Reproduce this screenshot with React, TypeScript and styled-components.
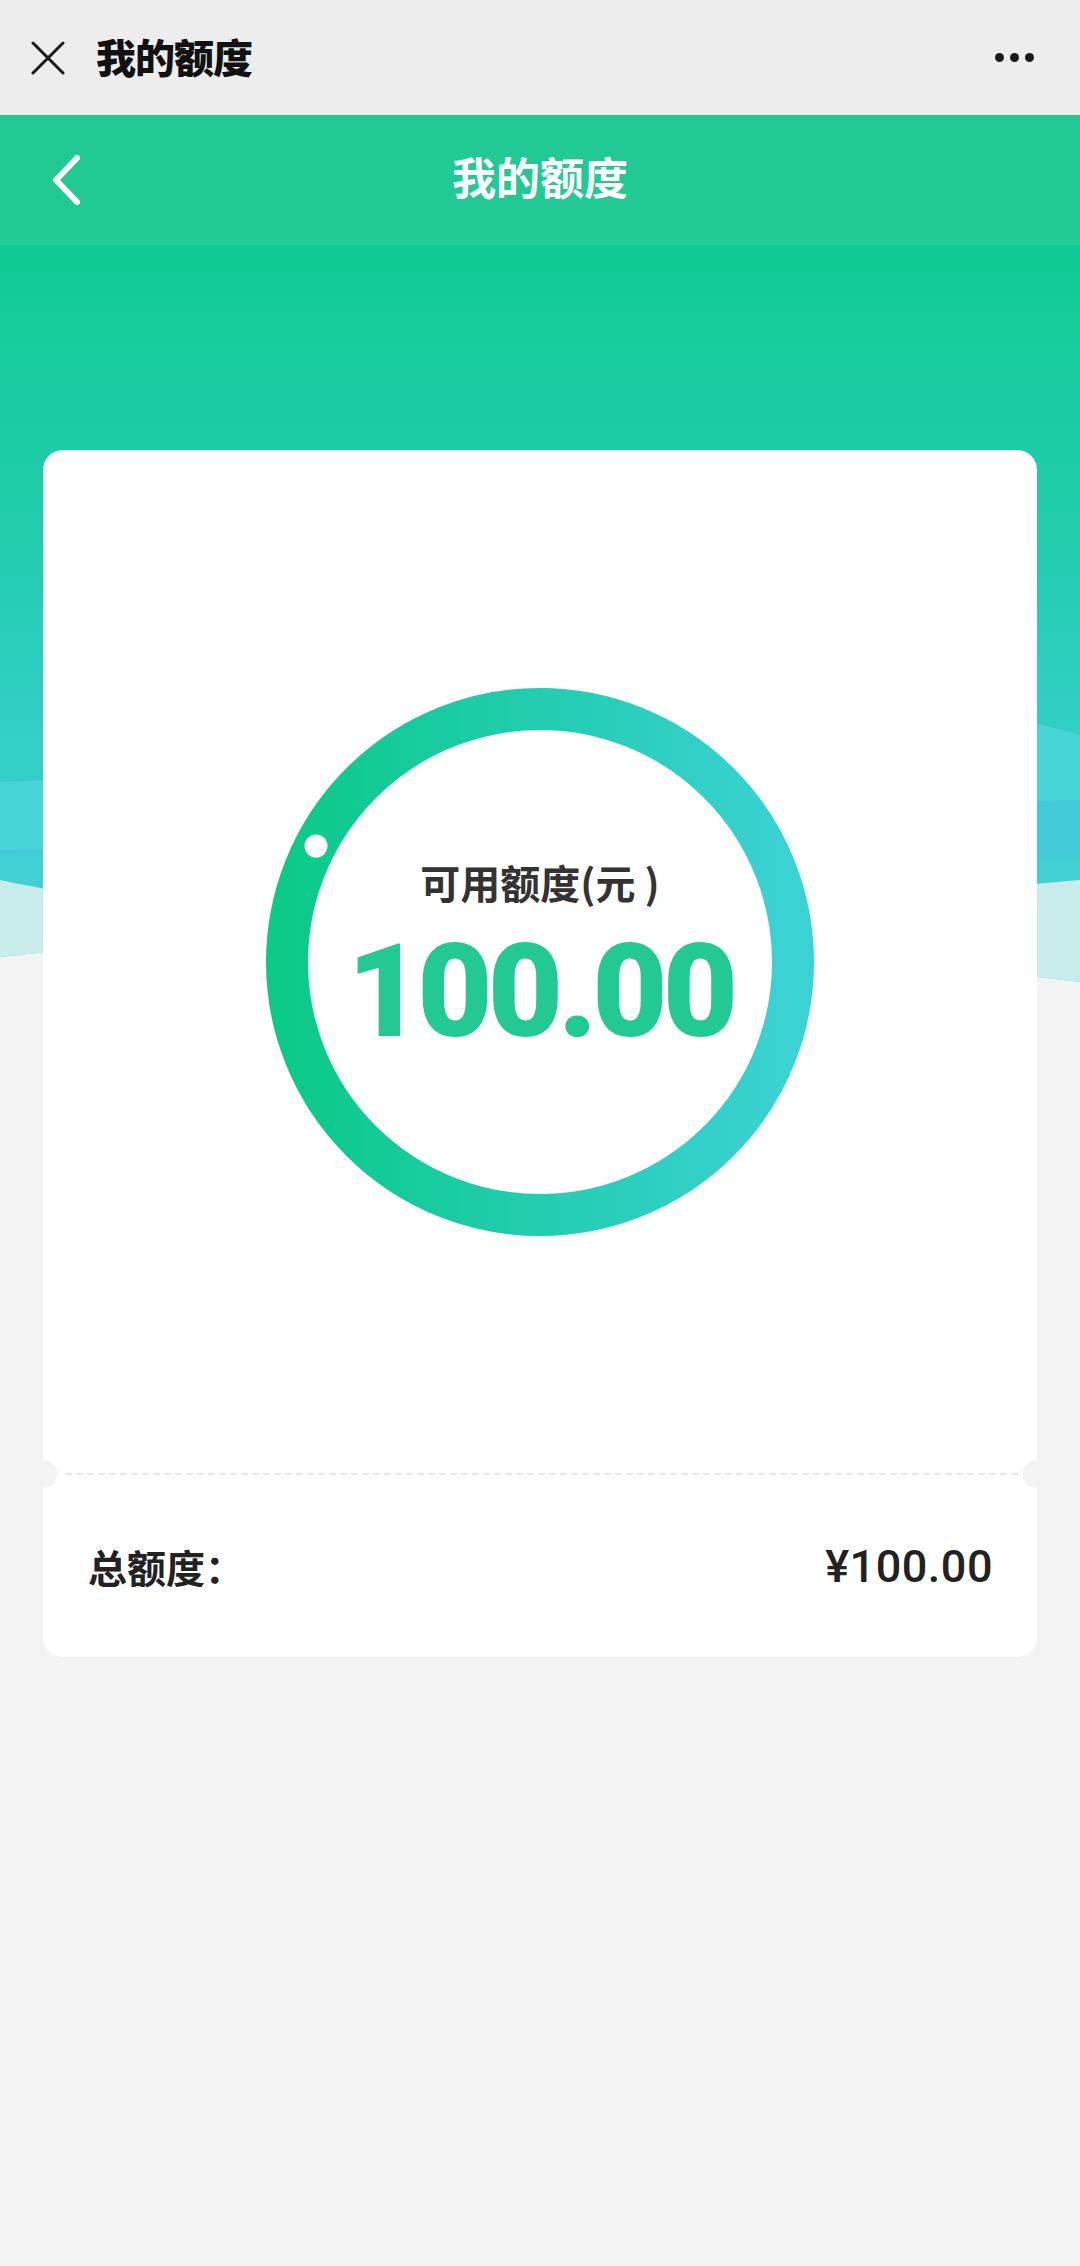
import React from "react";
import styled, { createGlobalStyle } from "styled-components";

const GlobalStyle = createGlobalStyle`
  html, body {
    margin: 0;
    padding: 0;
    background: #f3f3f3;
  }
  body {
    font-family: "Noto Sans CJK SC", "Noto Sans", sans-serif;
    -webkit-font-smoothing: antialiased;
    overflow-x: hidden;
  }
  * { box-sizing: border-box; }
`;

const Page = styled.div`
  width: 1080px;
  min-height: 2266px;
  background: #f3f3f3;
  display: flex;
  flex-direction: column;
`;

const TopBar = styled.div`
  height: 115px;
  background: #ededed;
  display: flex;
  align-items: center;
  padding: 0 44px 0 31px;
`;

const IconButton = styled.div`
  display: flex;
  align-items: center;
  justify-content: center;
  line-height: 0;
`;

const TopTitle = styled.h1`
  margin: 0 0 4px 31px;
  font-family: "Noto Sans CJK SC", sans-serif;
  font-size: 40px;
  font-weight: 900;
  color: #111;
  letter-spacing: -1px;
  flex: 1;
`;

const MoreDots = styled.div`
  display: flex;
  gap: 6px;
  align-items: center;
  margin-right: 2px;
`;

const Dot = styled.span`
  width: 9px;
  height: 9px;
  border-radius: 50%;
  background: #1a1a1a;
`;

const Header = styled.div`
  height: 130px;
  background: #21ca94;
  display: grid;
  grid-template-columns: 1fr auto 1fr;
  align-items: center;
`;

const BackButton = styled.div`
  padding-left: 50px;
  line-height: 0;
`;

const HeaderTitle = styled.h2`
  margin: 0 0 8px;
  font-family: "Noto Sans CJK SC", sans-serif;
  font-size: 44px;
  font-weight: 700;
  color: #ffffff;
`;

const Body = styled.div`
  position: relative;
  padding: 205px 43px 0;
`;

const Backdrop = styled.svg`
  position: absolute;
  top: 0;
  left: 0;
  width: 100%;
  height: 745px;
  z-index: 0;
  display: block;
`;

const Card = styled.div`
  position: relative;
  z-index: 1;
  background: #ffffff;
  border-radius: 20px;
  display: flex;
  flex-direction: column;
`;

const CardTop = styled.div`
  height: 1023px;
  display: flex;
  align-items: center;
  justify-content: center;
`;

const Gauge = styled.div`
  width: 548px;
  height: 548px;
  display: grid;
  place-items: center;
  & > * {
    grid-area: 1 / 1;
  }
`;

const GaugeText = styled.div`
  display: flex;
  flex-direction: column;
  align-items: center;
  gap: 22px;
  margin-bottom: 8px;
`;

const GaugeLabel = styled.div`
  font-family: "Noto Sans CJK SC", sans-serif;
  font-size: 40px;
  line-height: 46px;
  font-weight: 700;
  color: #333333;
`;

const GaugeValue = styled.div`
  font-family: Roboto, "Liberation Sans", sans-serif;
  font-size: 130px;
  line-height: 130px;
  font-weight: 900;
  color: #22c993;
  letter-spacing: -5px;
`;

const Divider = styled.div`
  position: relative;
  height: 2px;
  margin: 0 16px 0 22px;
  background: repeating-linear-gradient(
    to right,
    #e9e9e9 0 7px,
    transparent 7px 11px
  );
`;

const Notch = styled.span<{ $side: "left" | "right" }>`
  position: absolute;
  top: -13px;
  ${(p) => (p.$side === "left" ? "left: -36px;" : "right: -30px;")}
  width: 28px;
  height: 28px;
  border-radius: 50%;
  background: #f3f3f3;
`;

const TotalRow = styled.div`
  height: 182px;
  display: flex;
  align-items: center;
  justify-content: space-between;
  padding: 0 44px 0 45px;
`;

const TotalLabel = styled.span`
  font-family: "Noto Sans CJK SC", sans-serif;
  font-size: 39px;
  font-weight: 700;
  color: #222222;
`;

const TotalValue = styled.span`
  font-family: Roboto, "Liberation Sans", sans-serif;
  font-size: 45px;
  font-weight: 500;
  color: #222222;
  letter-spacing: 0.5px;
`;

const CloseIcon = () => (
  <svg width="34" height="34" viewBox="0 0 34 34">
    <path
      d="M2 2 L32 32 M32 2 L2 32"
      stroke="#1a1a1a"
      strokeWidth="3"
      strokeLinecap="round"
      fill="none"
    />
  </svg>
);

const BackIcon = () => (
  <svg width="32" height="52" viewBox="0 0 32 52">
    <path
      d="M27 4 L6 26 L27 48"
      stroke="#ffffff"
      strokeWidth="6"
      strokeLinecap="round"
      strokeLinejoin="round"
      fill="none"
    />
  </svg>
);

const BackdropArt = () => (
  <Backdrop viewBox="0 0 1080 745" preserveAspectRatio="none">
    <defs>
      <linearGradient id="heroGrad" x1="0" y1="0" x2="0" y2="1">
        <stop offset="0" stopColor="#10cb93" />
        <stop offset="0.35" stopColor="#20cdab" />
        <stop offset="0.65" stopColor="#31cfc5" />
        <stop offset="1" stopColor="#3dd1d2" />
      </linearGradient>
    </defs>
    <rect x="0" y="0" width="1080" height="745" fill="url(#heroGrad)" />
    <path d="M0 537 C 300 530 700 440 1036 478 L1080 490 L1080 745 L0 745 Z" fill="#48d5d8" />
    <path d="M0 605 C 400 600 700 560 1080 555 L1080 745 L0 745 Z" fill="#44cbda" />
    <path d="M0 610 C 400 610 800 615 1080 612 L1080 745 L0 745 Z" fill="#41d1d5" />
    <path
      d="M0 635 C 300 700 800 660 1080 635 L1080 737 C 700 690 300 680 0 712 Z"
      fill="#c8ecec"
    />
    <path d="M0 712 C 300 680 700 690 1080 737 L1080 745 L0 745 Z" fill="#f3f3f3" />
  </Backdrop>
);

const Ring = () => (
  <svg width="548" height="548" viewBox="0 0 548 548">
    <defs>
      <linearGradient id="ringGrad" x1="0" y1="0" x2="1" y2="0">
        <stop offset="0" stopColor="#0bca88" />
        <stop offset="0.5" stopColor="#22cdb0" />
        <stop offset="1" stopColor="#3bd2d4" />
      </linearGradient>
    </defs>
    <circle cx="274" cy="274" r="253" fill="none" stroke="url(#ringGrad)" strokeWidth="42" />
    <circle cx="50" cy="158" r="11.5" fill="#ffffff" />
  </svg>
);

export default function App() {
  return (
    <>
      <GlobalStyle />
      <Page>
        <TopBar>
          <IconButton>
            <CloseIcon />
          </IconButton>
          <TopTitle>我的额度</TopTitle>
          <MoreDots>
            <Dot />
            <Dot />
            <Dot />
          </MoreDots>
        </TopBar>
        <Header>
          <BackButton>
            <BackIcon />
          </BackButton>
          <HeaderTitle>我的额度</HeaderTitle>
          <div />
        </Header>
        <Body>
          <BackdropArt />
          <Card>
            <CardTop>
              <Gauge>
                <Ring />
                <GaugeText>
                  <GaugeLabel>可用额度(元 )</GaugeLabel>
                  <GaugeValue>100.00</GaugeValue>
                </GaugeText>
              </Gauge>
            </CardTop>
            <Divider>
              <Notch $side="left" />
              <Notch $side="right" />
            </Divider>
            <TotalRow>
              <TotalLabel>总额度：</TotalLabel>
              <TotalValue>¥100.00</TotalValue>
            </TotalRow>
          </Card>
        </Body>
      </Page>
    </>
  );
}
